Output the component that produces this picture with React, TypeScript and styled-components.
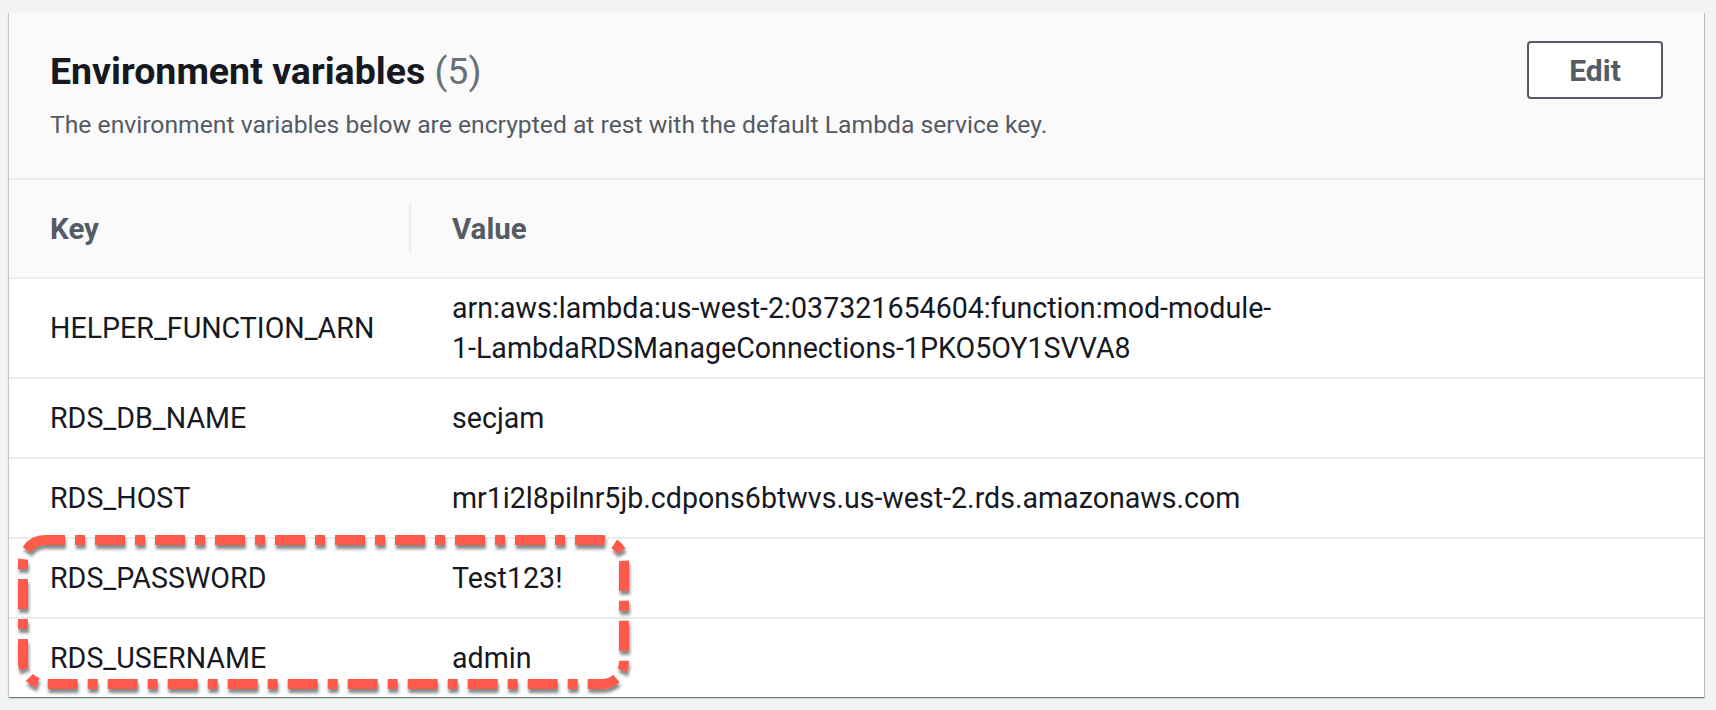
import React from "react";
import styled, { createGlobalStyle } from "styled-components";

const GlobalStyle = createGlobalStyle`
  html, body {
    margin: 0;
    padding: 0;
    background: #f2f3f3;
    font-family: Roboto, "Liberation Sans", Arial, sans-serif;
    color: #16191f;
  }
`;

const Page = styled.div`
  padding: 12px 12px 12px 9px;
`;

const Card = styled.section`
  position: relative;
  background: #ffffff;
  box-shadow: 0 1px 1px 0 rgba(0, 28, 36, 0.35), 1px 1px 1px 0 rgba(0, 28, 36, 0.2),
    -1px 1px 1px 0 rgba(0, 28, 36, 0.15);
`;

const Header = styled.header`
  display: flex;
  align-items: flex-start;
  justify-content: space-between;
  padding: 29px 41px 0 41px;
  background: #fafafa;
  border-bottom: 2px solid #eaeded;
`;

const TitleBlock = styled.div`
  padding: 8px 0 37px;
`;

const Title = styled.h2`
  margin: 0;
  font-size: 37.5px;
  line-height: 44px;
  font-weight: 700;
  color: #16191f;
`;

const Count = styled.span`
  font-weight: 400;
  color: #687078;
`;

const Description = styled.p`
  margin: 16px 0 0;
  font-size: 24.7px;
  line-height: 32px;
  color: #545b64;
`;

const EditButton = styled.button`
  width: 136px;
  height: 58px;
  border: 2px solid #545b64;
  border-radius: 4px;
  background: #ffffff;
  color: #545b64;
  font-family: inherit;
  font-size: 30px;
  font-weight: 700;
  cursor: pointer;
`;

const Row = styled.div<{ $head?: boolean }>`
  display: grid;
  grid-template-columns: 402px 1fr;
  align-items: center;
  min-height: ${(p) => (p.$head ? "97px" : "78px")};
  background: ${(p) => (p.$head ? "#fafafa" : "#ffffff")};
  border-top: ${(p) => (p.$head ? "none" : "2px solid #eaeded")};
`;

const HeadCell = styled.div<{ $divider?: boolean }>`
  position: relative;
  align-self: stretch;
  display: flex;
  align-items: center;
  padding: 0 41px;
  font-size: 29.5px;
  line-height: 40px;
  font-weight: 700;
  color: #545b64;

  &::after {
    content: "";
    display: ${(p) => (p.$divider ? "block" : "none")};
    position: absolute;
    right: 0;
    top: 24px;
    height: 48px;
    width: 2px;
    background: #eaeded;
  }
`;

const Cell = styled.div`
  padding: 9px 41px;
  font-size: 28.6px;
  line-height: 40px;
  color: #16191f;
`;

const Annotation = styled.svg`
  position: absolute;
  left: 4px;
  top: 515px;
  width: 640px;
  height: 190px;
  pointer-events: none;
  overflow: visible;
`;

type EnvVar = { key: string; value: React.ReactNode };

const vars: EnvVar[] = [
  {
    key: "HELPER_FUNCTION_ARN",
    value: (
      <>
        arn:aws:lambda:us-west-2:037321654604:function:mod-module-
        <br />
        1-LambdaRDSManageConnections-1PKO5OY1SVVA8
      </>
    ),
  },
  { key: "RDS_DB_NAME", value: "secjam" },
  { key: "RDS_HOST", value: "mr1i2l8pilnr5jb.cdpons6btwvs.us-west-2.rds.amazonaws.com" },
  { key: "RDS_PASSWORD", value: "Test123!" },
  { key: "RDS_USERNAME", value: "admin" },
];

export default function App() {
  return (
    <Page>
      <GlobalStyle />
      <Card>
        <Header>
          <TitleBlock>
            <Title>
              Environment variables <Count>(5)</Count>
            </Title>
            <Description>
              The environment variables below are encrypted at rest with the default Lambda service key.
            </Description>
          </TitleBlock>
          <EditButton>Edit</EditButton>
        </Header>
        <Row $head>
          <HeadCell $divider>Key</HeadCell>
          <HeadCell>Value</HeadCell>
        </Row>
        {vars.map((v) => (
          <Row key={v.key}>
            <Cell>{v.key}</Cell>
            <Cell>{v.value}</Cell>
          </Row>
        ))}
        <Annotation viewBox="0 0 640 190">
          <defs>
            <filter id="annShadow" x="-10%" y="-20%" width="120%" height="140%">
              <feDropShadow dx="1" dy="4" stdDeviation="1.5" floodColor="#2a2a2a" floodOpacity="0.55" />
            </filter>
          </defs>
          <rect
            x="10"
            y="13"
            width="601"
            height="144"
            rx="22"
            ry="22"
            fill="none"
            stroke="#fd5a4b"
            strokeWidth="10"
            strokeDasharray="30 10 10 10"
            strokeDashoffset="10"
            filter="url(#annShadow)"
          />
        </Annotation>
      </Card>
    </Page>
  );
}
